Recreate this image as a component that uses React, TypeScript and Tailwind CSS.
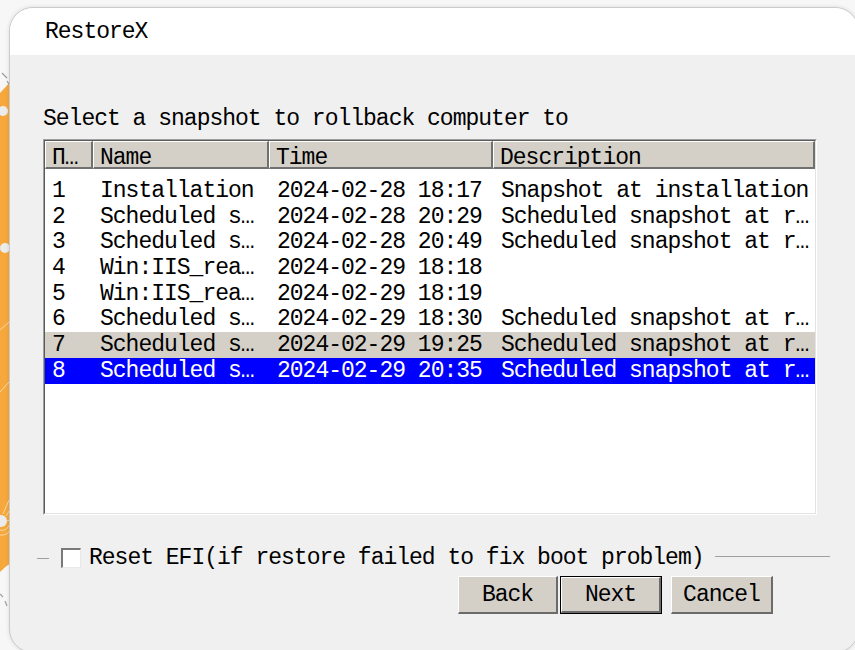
import { useState } from "react";

type Snapshot = { id: number; name: string; time: string; desc: string };

const SNAPSHOTS: Snapshot[] = [
  { id: 1, name: "Installation", time: "2024-02-28 18:17", desc: "Snapshot at installation" },
  { id: 2, name: "Scheduled snapshot", time: "2024-02-28 20:29", desc: "Scheduled snapshot at regular interval" },
  { id: 3, name: "Scheduled snapshot", time: "2024-02-28 20:49", desc: "Scheduled snapshot at regular interval" },
  { id: 4, name: "Win:IIS_ready", time: "2024-02-29 18:18", desc: "" },
  { id: 5, name: "Win:IIS_ready", time: "2024-02-29 18:19", desc: "" },
  { id: 6, name: "Scheduled snapshot", time: "2024-02-29 18:30", desc: "Scheduled snapshot at regular interval" },
  { id: 7, name: "Scheduled snapshot", time: "2024-02-29 19:25", desc: "Scheduled snapshot at regular interval" },
  { id: 8, name: "Scheduled snapshot", time: "2024-02-29 20:35", desc: "Scheduled snapshot at regular interval" },
];

// listview cuts long cells to a fixed number of characters
const clip = (s: string, n: number) => (s.length > n ? s.slice(0, n - 1) + "…" : s);

const MONO = "font-['Liberation_Mono',monospace] text-[23px] tracking-[-1px] leading-[26px]";

const HEAD_CELL =
  "h-full flex items-center pl-[6px] pt-[6px] bg-[#d4d0c8] border-t border-l border-white border-r-2 border-b-2 border-r-[#707070] border-b-[#707070] whitespace-nowrap overflow-hidden";

function Decoration() {
  return (
    <svg className="absolute left-0 top-0" width="12" height="650" viewBox="0 0 12 650">
      <path d="M0 93 L12 80 L12 562 Q6 566 0 572 Z" fill="#f6a83c" />
      <path d="M2 73 L7 78 M7 81 L9 84" stroke="#9a9a9a" strokeWidth="1.2" />
      <circle cx="3" cy="111" r="5" fill="#ececec" />
      <circle cx="5" cy="248" r="5" fill="#ececec" />
      <path d="M0 330 L9 322 M0 392 L9 382" stroke="#fbe3c0" strokeWidth="0.8" />
      <circle cx="1" cy="521" r="6" fill="#ececec" />
      <path d="M3 514 L9 500 M6 516 L11 508 M7 521 L12 519 M0 530 Q6 532 10 524 M0 535 Q8 536 11 528" stroke="#fbe3c0" strokeWidth="0.8" fill="none" />
      <path d="M0 594 L3 597 M5 601 L7 606" stroke="#a0a0a0" strokeWidth="1.2" />
    </svg>
  );
}

function WinButton({ label, isDefault, wide }: { label: string; isDefault?: boolean; wide?: boolean }) {
  const face = (
    <div className="h-full w-full flex items-center justify-center bg-[#d4d0c8] border-t border-l border-white border-r-2 border-b-2 border-r-[#6b6b6b] border-b-[#6b6b6b]">
      {label}
    </div>
  );
  if (isDefault) return <button className="h-[38px] w-[102px] border border-black">{face}</button>;
  return <button className={`h-[38px] ${wide ? "w-[102px]" : "w-[100px]"}`}>{face}</button>;
}

export default function App() {
  const [selected, setSelected] = useState(8);
  const [hovered, setHovered] = useState(7);
  const [resetEfi, setResetEfi] = useState(false);

  return (
    <div className={`relative w-[855px] h-[650px] overflow-hidden bg-[#f7f7f7] text-black ${MONO}`}>
      <Decoration />
      <div className="relative ml-[9px] mt-[7px] w-[850px] h-[646px] rounded-[24px] border border-[#cbcbcb] bg-[#f0f0f0] overflow-hidden shadow-[0_0_4px_rgba(0,0,0,0.12)]">
        <div className="h-[47px] bg-white flex items-center pl-[35px] pt-[1px]">RestoreX</div>

        <div className="pl-[33px]">
          <div className="mt-[51px] h-[26px]">Select a snapshot to rollback computer to</div>

          {/* snapshot list */}
          <div className="mt-[7px] w-[774px] h-[376px] border-t border-l border-[#a0a0a0] border-b border-r border-b-white border-r-white">
            <div className="h-full w-full bg-white border-t border-l border-[#5a5a5a] border-b border-r border-b-[#e3e3e3] border-r-[#e3e3e3]">
              <div className="flex h-[28px]">
                <div className={`${HEAD_CELL} w-[48px]`}>П…</div>
                <div className={`${HEAD_CELL} w-[176px]`}>Name</div>
                <div className={`${HEAD_CELL} w-[224px]`}>Time</div>
                <div className={`${HEAD_CELL} w-[322px]`}>Description</div>
              </div>
              <div className="pt-[9px]">
                {SNAPSHOTS.map((s) => {
                  const isSel = s.id === selected;
                  const isHot = !isSel && s.id === hovered;
                  return (
                    <div
                      key={s.id}
                      onClick={() => setSelected(s.id)}
                      onMouseEnter={() => setHovered(s.id)}
                      className={`flex h-[25.7px] items-center whitespace-nowrap ${
                        isSel ? "bg-[#0000ff] text-white" : isHot ? "bg-[#d4d0c8]" : ""
                      }`}
                    >
                      <div className="w-[48px] pl-[7px]">{s.id}</div>
                      <div className="w-[176px] pl-[7px]">{clip(s.name, 12)}</div>
                      <div className="w-[224px] pl-[8px]">{s.time}</div>
                      <div className="w-[322px] pl-[8px]">{clip(s.desc, 24)}</div>
                    </div>
                  );
                })}
              </div>
            </div>
          </div>
        </div>

        {/* EFI option */}
        <div className="mt-[30px] flex items-center h-[26px] pl-[27px]">
          <div className="w-[12px] h-px bg-[#a0a0a0]" />
          <button
            onClick={() => setResetEfi(!resetEfi)}
            className="ml-[12px] w-[20px] h-[20px] border-t-2 border-l-2 border-t-[#7a7a7a] border-l-[#7a7a7a] border-b border-r border-b-[#e8e8e8] border-r-[#e8e8e8] bg-white flex items-center justify-center text-[14px] leading-none"
          >
            {resetEfi ? "✓" : ""}
          </button>
          <span className="ml-[8px]">Reset EFI(if restore failed to fix boot problem)</span>
          <div className="ml-[11px] w-[115px] h-px bg-[#a0a0a0] -mt-[3px]" />
        </div>

        <div className="mt-[5px] flex items-center pl-[448px]">
          <WinButton label="Back" />
          <div className="ml-[2px]">
            <WinButton label="Next" isDefault />
          </div>
          <div className="ml-[9px]">
            <WinButton label="Cancel" wide />
          </div>
        </div>
      </div>
    </div>
  );
}
